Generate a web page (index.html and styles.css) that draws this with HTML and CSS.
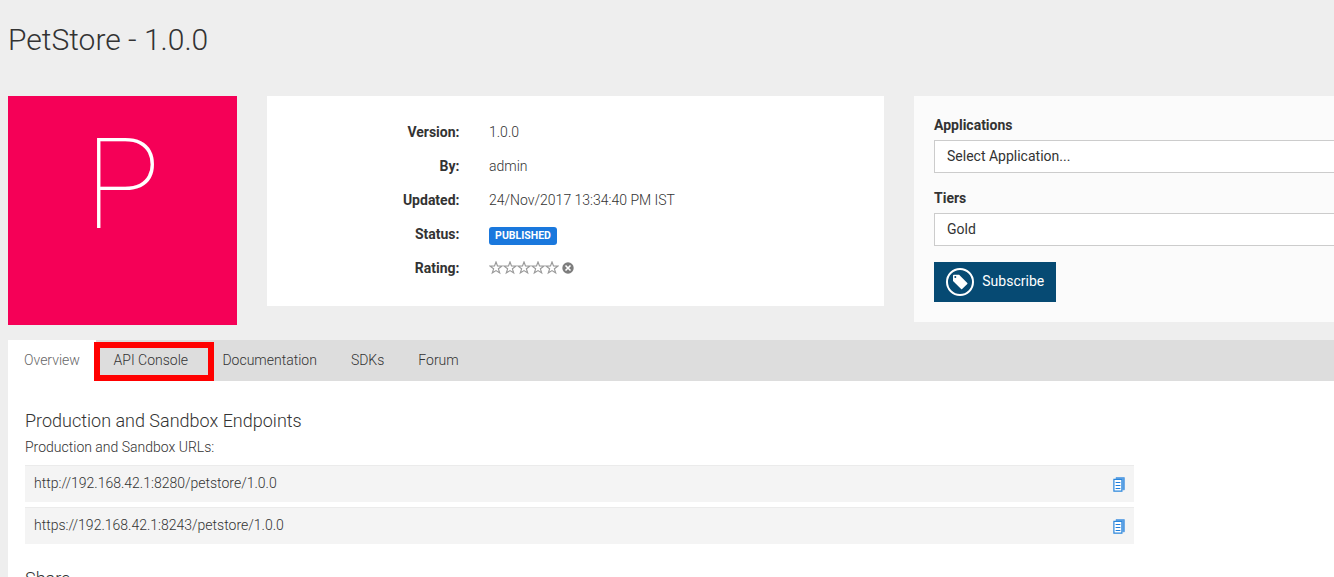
FILE: index.html
```
<!DOCTYPE html>
<html lang="en">
<head>
<meta charset="utf-8">
<title>PetStore - 1.0.0</title>
<link rel="stylesheet" href="styles.css">
</head>
<body>
<svg class="sprite" aria-hidden="true">
  <symbol id="star" viewBox="0 0 14 14"><path d="M7 1 8.5 5 12.9 5.1 9.4 7.8 10.7 12 7 9.6 3.3 12 4.6 7.8 1.1 5.1 5.5 5Z" fill="none" stroke="#999" stroke-width="1.15"/></symbol>
  <symbol id="copy" viewBox="0 0 12 15"><path d="M3 1.6V.6h8.4v12.2h-1.6V1.8H3Z" fill="#5aa0e4" stroke="#4b97e2" stroke-width=".7"/><path d="M.9 2.4h8v11.7h-8z" fill="#fff" stroke="#2a86dc" stroke-width="1.2"/><path d="M2.6 5.5h4.8M2.6 8.5h4.8M2.6 11.5h4.8" stroke="#1f7edb" stroke-width="1.1"/></symbol>
</svg>
<h1 class="title">PetStore - 1.0.0</h1>
<div class="summary">
  <div class="thumb">P</div>
  <dl class="info">
    <dt>Version:</dt><dd>1.0.0</dd>
    <dt>By:</dt><dd>admin</dd>
    <dt>Updated:</dt><dd>24/Nov/2017 13:34:40 PM IST</dd>
    <dt>Status:</dt><dd><span class="badge">PUBLISHED</span></dd>
    <dt>Rating:</dt><dd class="rating">
      <svg><use href="#star"/></svg><svg><use href="#star"/></svg><svg><use href="#star"/></svg><svg><use href="#star"/></svg><svg><use href="#star"/></svg>
      <svg class="clear" viewBox="0 0 12 12"><circle cx="6" cy="6" r="5.7" fill="#7d7d7d"/><path d="m3.5 3.5 5 5m0-5-5 5" stroke="#fff" stroke-width="1.6"/></svg>
    </dd>
  </dl>
  <div class="subscribe">
    <div class="label">Applications</div>
    <div class="select">Select Application...</div>
    <div class="label">Tiers</div>
    <div class="select">Gold</div>
    <div class="button">
      <svg viewBox="0 0 28 28"><circle cx="14" cy="14" r="13" fill="none" stroke="#fff" stroke-width="2"/><path fill="#fff" fill-rule="evenodd" d="M7 7.7q0-.9.9-.9h5.2L21.3 15q.4.5 0 .9L16.1 21q-.5.5-1 0L7 13.1ZM9.3 8a1 1 0 1 0 0 2 1 1 0 0 0 0-2Z"/></svg>
      <span>Subscribe</span>
    </div>
  </div>
</div>
<div class="tabs">
  <div class="tab active">Overview</div>
  <div class="tab marked">API Console</div>
  <div class="tab">Documentation</div>
  <div class="tab">SDKs</div>
  <div class="tab">Forum</div>
</div>
<div class="content">
  <h2>Production and Sandbox Endpoints</h2>
  <p>Production and Sandbox URLs:</p>
  <div class="url"><span>http://192.168.42.1:8280/petstore/1.0.0</span><svg><use href="#copy"/></svg></div>
  <div class="url"><span>https://192.168.42.1:8243/petstore/1.0.0</span><svg><use href="#copy"/></svg></div>
  <h2 class="share">Share</h2>
</div>
</body>
</html>
```
FILE: styles.css
```
*, *::after { box-sizing: border-box; }
html { height: 577px; overflow: hidden; background: #eee; }
body { margin: 0; padding-left: 8px; height: 577px; overflow: hidden; display: flex; flex-direction: column; font: 300 14px/20px Roboto, "Liberation Sans", sans-serif; color: #333; }
.sprite { position: absolute; width: 0; height: 0; }
.title { margin: 0; height: 96px; padding-top: 22px; font-size: 30px; font-weight: 300; line-height: 36px; flex: none; }
.summary { display: flex; align-items: flex-start; gap: 30px; height: 244px; flex: none; }
.thumb { width: 229px; height: 229px; flex: none; background: #f50057; color: #fff; font-size: 126px; font-weight: 100; line-height: 178px; text-align: center; }
.info { width: 617px; height: 210px; flex: none; margin: 0; padding-top: 19px; background: #fff; display: grid; grid-template-columns: 192.5px 1fr; grid-auto-rows: 34px; column-gap: 29.5px; line-height: 34px; }
.info dt { font-weight: 700; text-align: right; }
.info dd { margin: 0; }
.badge { display: block; width: 68px; height: 18px; margin-top: 10px; border-radius: 3px; background: #1a78dd; color: #fff; font-size: 10.5px; font-weight: 700; line-height: 18px; text-align: center; }
.rating { display: flex; align-items: center; }
.rating svg { width: 14px; height: 14px; margin-bottom: 1px; }
.rating .clear { width: 12px; height: 12px; margin: 0 0 1px 3px; }
.subscribe { width: 440px; height: 226px; flex: none; padding: 19px 0 0 20px; background: #fbfbfb; }
.label { font-weight: 700; margin-bottom: 5px; }
.select { height: 33px; border: 1px solid #ccc; background: #fff; padding: 5px 12px; margin-bottom: 15px; font-weight: 400; }
.button { display: flex; align-items: center; gap: 8.3px; width: 122px; height: 40px; margin-top: 16px; padding: 0 0 1px 12px; background: #064a73; color: #fff; font-weight: 400; }
.button svg { width: 28px; height: 28px; }
.button span { margin-bottom: 1px; }
.tabs { display: flex; height: 41px; flex: none; background: #ddd; line-height: 40px; }
.tab { padding: 0 17px; }
.active { width: 88px; padding: 0 0 0 16px; background: #fff; color: #666; }
.marked { position: relative; width: 109.4px; padding: 0 0 0 17.6px; }
.marked::after { content: ""; position: absolute; left: -2px; top: 2px; width: 120px; height: 39px; border: 6px solid #f00; }
.content { flex: 1; background: #fff; padding: 29px 0 0 17px; }
h2 { margin: 0; font-size: 18px; font-weight: 300; line-height: 22px; }
.content p { margin: 5px 0 8px; }
.url { display: flex; justify-content: space-between; align-items: center; width: 1109px; height: 37px; margin-bottom: 5px; padding: 0 9px 1px; background: #f4f4f4; border-top: 1px solid #ebebeb; }
.url span { margin-bottom: 1px; }
.url svg { width: 12px; height: 15px; margin-top: 1px; }
.share { margin-top: 24px; }
```
